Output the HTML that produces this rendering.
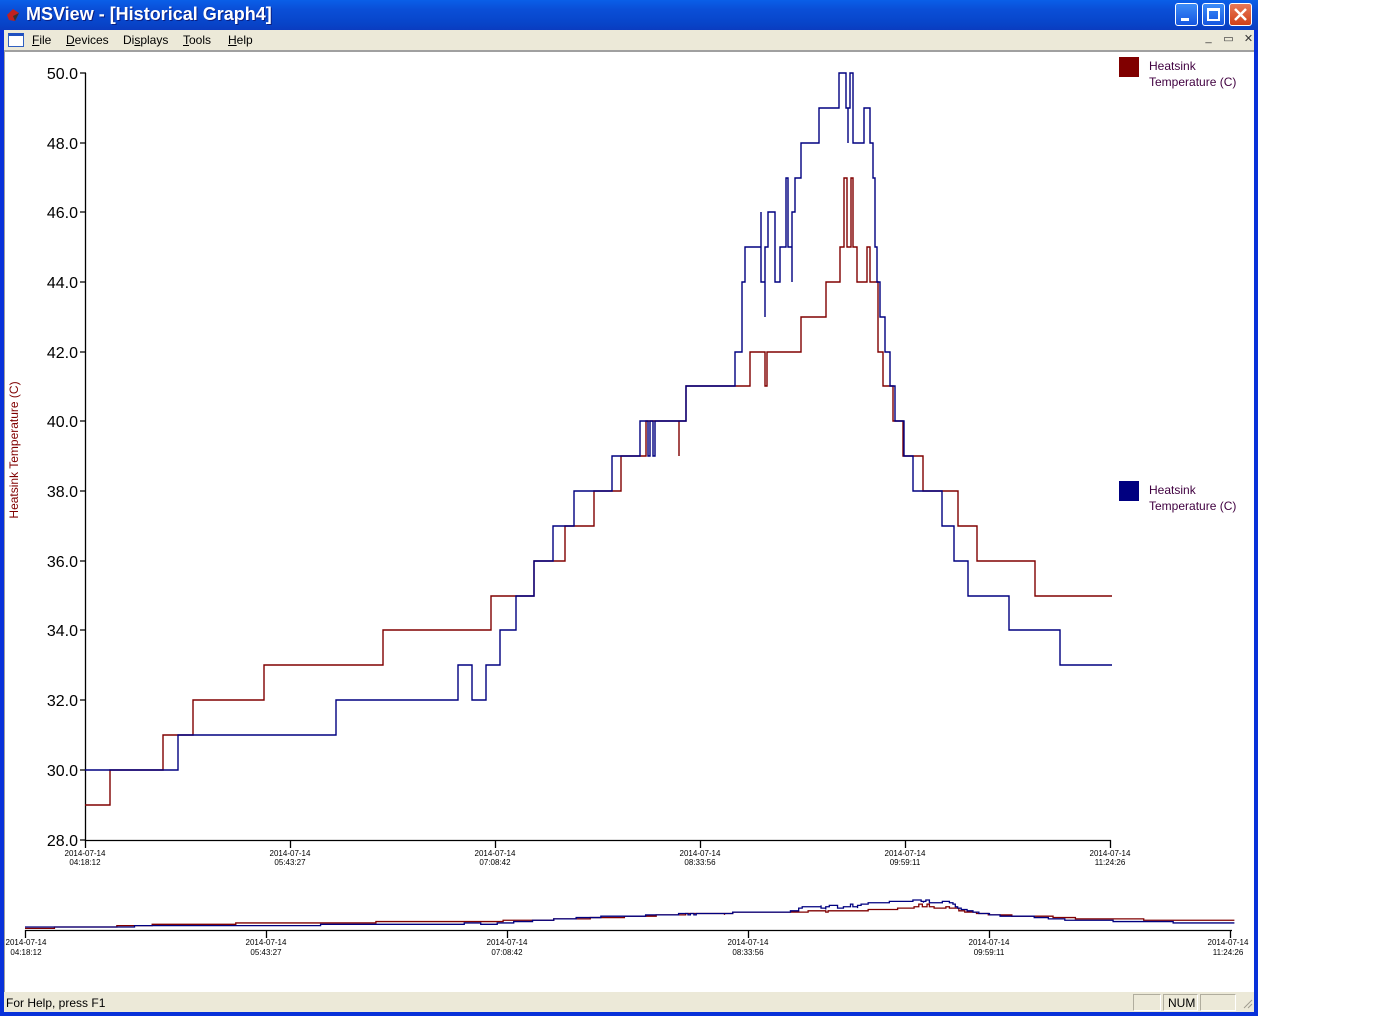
<!DOCTYPE html>
<html><head><meta charset="utf-8"><style>
*{margin:0;padding:0;box-sizing:border-box}
body{width:1400px;height:1016px;background:#fff;position:relative;overflow:hidden;font-family:"Liberation Sans",sans-serif}
.win{position:absolute;left:0;top:0;width:1258px;height:1016px;background:#0831d9;}
.title{position:absolute;left:0;top:0;width:1258px;height:30px;background:linear-gradient(#0a5fe8,#0a4fd8 30%,#0844c8 80%,#0a3cc0);}
.title span{position:absolute;left:26px;top:4px;color:#fff;font-weight:bold;font-size:18px;text-shadow:1px 1px #0a1e80}
.tb{position:absolute;top:3px;width:23px;height:23px;border:1px solid #fff;border-radius:3px;background:linear-gradient(#3c8cf8,#1656e0)}
.menu{position:absolute;left:4px;top:30px;width:1250px;height:20px;background:#ece9d8;font-size:12px}
.menu b{font-weight:normal;position:absolute;top:3px}
.client{position:absolute;left:4px;top:50px;width:1250px;height:942px;background:#fff;border-top:2px solid #a0a0a0;border-left:1px solid #a0a0a0}
.status{position:absolute;left:4px;top:992px;width:1250px;height:20px;background:#ece9d8;font-size:12px}
.pn{position:absolute;top:2px;height:17px;border:1px solid #b0ad9e;border-right-color:#fff;border-bottom-color:#fff}
.mb{position:absolute;top:2px;width:17px;height:15px;font-size:11px;text-align:center;color:#333}
</style></head><body>
<div class="win">
<div class="title">
<svg style="position:absolute;left:5px;top:7px" width="16" height="16"><polygon points="2,8 8,2 14,6 10,14 4,13" fill="#c02020"/><polygon points="8,9 14,6 10,14" fill="#333"/></svg>
<span>MSView - [Historical Graph4]</span>
<div class="tb" style="left:1175px"><div style="position:absolute;left:5px;top:14px;width:8px;height:3px;background:#fff"></div></div>
<div class="tb" style="left:1202px"><div style="position:absolute;left:4px;top:4px;width:13px;height:13px;border:2px solid #fff;border-top-width:3px"></div></div>
<div class="tb" style="left:1229px;background:linear-gradient(#e87858,#d04018)"><svg width="21" height="21"><path d="M5,5L16,16M16,5L5,16" stroke="#fff" stroke-width="2.5"/></svg></div>
</div>
<div class="menu">
<div style="position:absolute;left:4px;top:3px;width:16px;height:14px;border:1px solid #3060c0;border-top:3px solid #2050c0;background:#fff"></div>
<b style="left:28px"><u>F</u>ile</b><b style="left:62px"><u>D</u>evices</b><b style="left:119px">Di<u>s</u>plays</b><b style="left:179px"><u>T</u>ools</b><b style="left:224px"><u>H</u>elp</b>
<div class="mb" style="left:1196px">_</div><div class="mb" style="left:1216px">▭</div><div class="mb" style="left:1236px">✕</div>
</div>
<div class="client"></div>
<div class="status"><span style="position:absolute;left:2px;top:4px">For Help, press F1</span>
<div class="pn" style="left:1129px;width:28px"></div>
<div class="pn" style="left:1159px;width:35px;padding:1px 0 0 4px">NUM</div>
<div class="pn" style="left:1196px;width:36px"></div>
</div>
</div>
<svg style="position:absolute;left:0;top:0" width="1400" height="1016" font-family="Liberation Sans,sans-serif">
<g stroke="#000" stroke-width="1.3" fill="none">
<path d="M85.5,73V840.5H1111"/>
<path d="M80,73H86M80,143H86M80,212H86M80,282H86M80,352H86M80,421H86M80,491H86M80,561H86M80,630H86M80,700H86M80,770H86M80,840H86"/>
<path d="M85.5,840V848M290.5,840V848M495.5,840V848M700.5,840V848M905.5,840V848M1110.5,840V848"/>
<path d="M25,930.5H1232M25.5,930V938M266.5,930V938M507.5,930V938M748.5,930V938M989.5,930V938M1230.5,930V938"/>
</g>
<g font-size="16" text-anchor="end" fill="#000">
<text x="78" y="79">50.0</text><text x="78" y="149">48.0</text><text x="78" y="218">46.0</text><text x="78" y="288">44.0</text><text x="78" y="358">42.0</text><text x="78" y="427">40.0</text><text x="78" y="497">38.0</text><text x="78" y="567">36.0</text><text x="78" y="636">34.0</text><text x="78" y="706">32.0</text><text x="78" y="776">30.0</text><text x="78" y="846">28.0</text>
</g>
<text transform="translate(18,450) rotate(-90)" font-size="12" fill="#800000" text-anchor="middle">Heatsink Temperature (C)</text>
<g font-size="8" text-anchor="middle" fill="#000">
<text x="85" y="856">2014-07-14</text><text x="85" y="865">04:18:12</text>
<text x="290" y="856">2014-07-14</text><text x="290" y="865">05:43:27</text>
<text x="495" y="856">2014-07-14</text><text x="495" y="865">07:08:42</text>
<text x="700" y="856">2014-07-14</text><text x="700" y="865">08:33:56</text>
<text x="905" y="856">2014-07-14</text><text x="905" y="865">09:59:11</text>
<text x="1110" y="856">2014-07-14</text><text x="1110" y="865">11:24:26</text>
<text x="26" y="945">2014-07-14</text><text x="26" y="955">04:18:12</text>
<text x="266" y="945">2014-07-14</text><text x="266" y="955">05:43:27</text>
<text x="507" y="945">2014-07-14</text><text x="507" y="955">07:08:42</text>
<text x="748" y="945">2014-07-14</text><text x="748" y="955">08:33:56</text>
<text x="989" y="945">2014-07-14</text><text x="989" y="955">09:59:11</text>
<text x="1228" y="945">2014-07-14</text><text x="1228" y="955">11:24:26</text>
</g>
<g fill="none" stroke-width="1.4">
<path stroke="#800000" d="M85,805H110V770H163V735H193V700H264V665H383V630H491V596H534V561H565V526H594V491H621V456H646V421H679V456V421H686V386H750V352H765V386H767V352H801V317H826V282H840V247H844V178H847V247H851V178H853V247H857V282H867V247H870V282H878V352H883V386H893V421H903V456H923V491H958V526H977V561H1035V596H1112"/>
<path stroke="#000080" d="M85,770H178V735H336V700H458V665H472V700H486V665H500V630H516V596H534V561H553V526H574V491H612V456H640V421H648V456H650V421H653V456H655V421H686V386H735V352H742V282H745V247H761V212V282H765V317V247H768V212H775V282H780V247H786V178H788V247H792V282V212H795V178H801V143H819V108H839V73H846V108H848V143V108H850V73H853V108V143H864V108H870V143H873V178H875V247H877V282H880V317H885V352H890V386H895V421H904V456H913V491H942V526H954V561H968V596H1009V630H1060V665H1112"/>
</g>
<g fill="none" transform="translate(25,927) scale(1.1776,0.0387) translate(-85,-770)">
<path vector-effect="non-scaling-stroke" stroke-width="1.3" stroke="#800000" d="M85,805H110V770H163V735H193V700H264V665H383V630H491V596H534V561H565V526H594V491H621V456H646V421H679V456V421H686V386H750V352H765V386H767V352H801V317H826V282H840V247H844V178H847V247H851V178H853V247H857V282H867V247H870V282H878V352H883V386H893V421H903V456H923V491H958V526H977V561H1035V596H1112"/>
<path vector-effect="non-scaling-stroke" stroke-width="1.3" stroke="#000080" d="M85,770H178V735H336V700H458V665H472V700H486V665H500V630H516V596H534V561H553V526H574V491H612V456H640V421H648V456H650V421H653V456H655V421H686V386H735V352H742V282H745V247H761V212V282H765V317V247H768V212H775V282H780V247H786V178H788V247H792V282V212H795V178H801V143H819V108H839V73H846V108H848V143V108H850V73H853V108V143H864V108H870V143H873V178H875V247H877V282H880V317H885V352H890V386H895V421H904V456H913V491H942V526H954V561H968V596H1009V630H1060V665H1112"/>
</g>
<rect x="1119" y="57" width="20" height="20" fill="#800000"/>
<rect x="1119" y="481" width="20" height="20" fill="#000080"/>
<g font-size="12" fill="#400040">
<text x="1149" y="70">Heatsink</text><text x="1149" y="86">Temperature (C)</text>
<text x="1149" y="494">Heatsink</text><text x="1149" y="510">Temperature (C)</text>
</g>
<path d="M1252,1000L1244,1008M1252,1004L1248,1008" stroke="#a09d90"/>
</svg>
</body></html>
